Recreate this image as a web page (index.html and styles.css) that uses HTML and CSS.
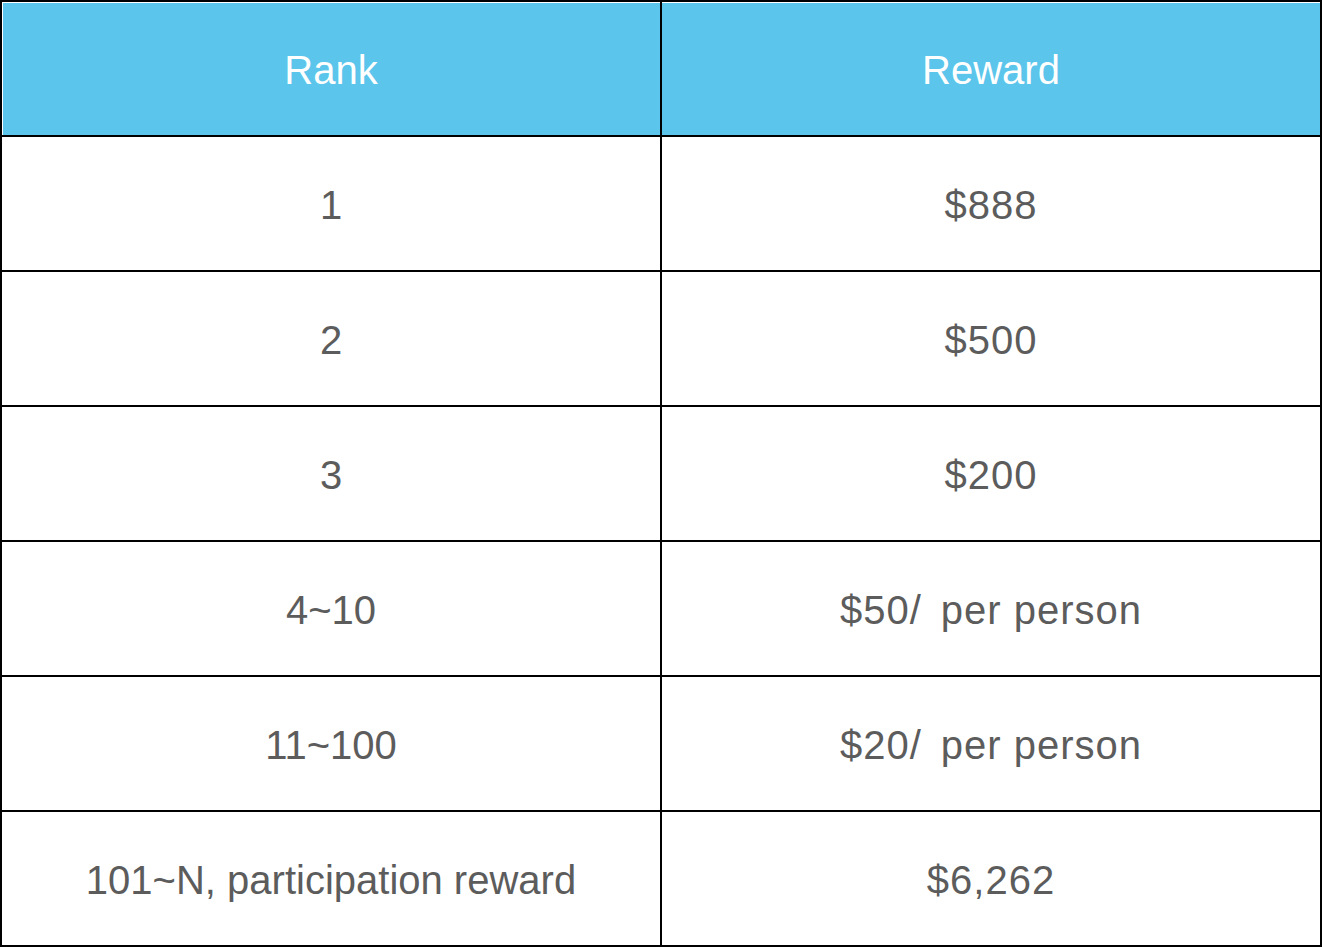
FILE: index.html
```html
<!DOCTYPE html>
<html lang="en">
<head>
<meta charset="utf-8">
<title>Rank Rewards</title>
<link rel="stylesheet" href="styles.css">
</head>
<body>
<div class="reward-table">
  <div class="cell head first">Rank</div>
  <div class="cell head">Reward</div>

  <div class="cell">1</div>
  <div class="cell num">$888</div>

  <div class="cell">2</div>
  <div class="cell num">$500</div>

  <div class="cell">3</div>
  <div class="cell num">$200</div>

  <div class="cell">4~10</div>
  <div class="cell num"><span class="label"><span class="amount">$50/</span> per person</span></div>

  <div class="cell">11~100</div>
  <div class="cell num"><span class="label"><span class="amount">$20/</span> per person</span></div>

  <div class="cell">101~N, participation reward</div>
  <div class="cell num">$6,262</div>
</div>
</body>
</html>
```

FILE: styles.css
```css
html, body {
  margin: 0;
  padding: 0;
  background: #ffffff;
}

.reward-table {
  width: 1322px;
  box-sizing: border-box;
  display: grid;
  grid-template-columns: 1fr 1fr;
  grid-auto-rows: 135px;
  border-top: 2px solid #000;
  border-left: 2px solid #000;
  font-family: "Liberation Sans", Arial, sans-serif;
  font-size: 40px;
  color: #5c5c5c;
}

.cell {
  box-sizing: border-box;
  border-right: 2px solid #000;
  border-bottom: 2px solid #000;
  padding-top: 4px;
  display: flex;
  align-items: center;
  justify-content: center;
  white-space: nowrap;
}

.cell.head {
  background: #5bc5eb;
  color: #ffffff;
  box-shadow: inset 0 1px 0 #ffffff;
}

.cell.head.first {
  box-shadow: inset 1px 1px 0 #ffffff;
}

.cell.num {
  letter-spacing: 1px;
}

.amount {
  margin-right: 7px;
}
```
